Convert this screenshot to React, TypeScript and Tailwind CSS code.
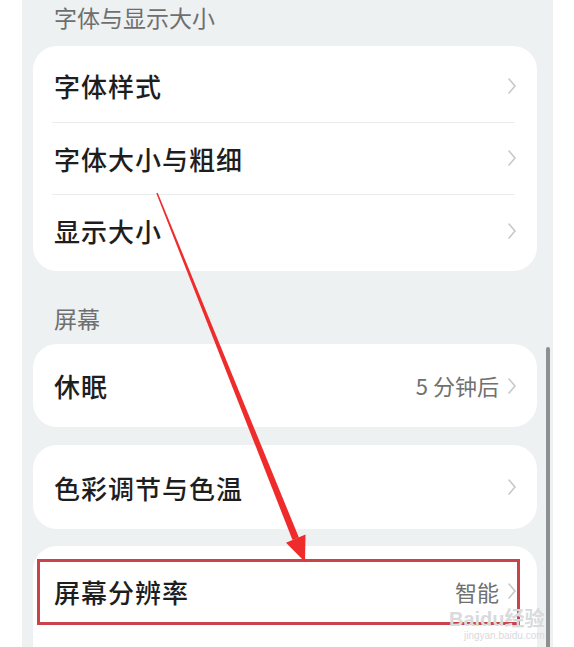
import React from 'react';

const FONT = '"Noto Sans CJK SC", "Noto Sans", sans-serif';

function Chevron() {
  return (
    <svg width="10" height="18" viewBox="0 0 10 18" className="shrink-0">
      <path d="M2 2 L8 9 L2 16" fill="none" stroke="#c6c8ca" strokeWidth="1.6" strokeLinecap="round" strokeLinejoin="round" />
    </svg>
  );
}

function Row({ label, value, className = '' }: { label: string; value?: string; className?: string }) {
  return (
    <div className={`flex items-center justify-between pl-[21px] pr-[20px] ${className}`}>
      <span className="text-[26px] font-medium text-[#1e1e1e] tracking-[1px]">{label}</span>
      <div className="flex items-center gap-[8px]">
        {value && <span className="text-[22px] text-[#707070]">{value}</span>}
        <Chevron />
      </div>
    </div>
  );
}

function SectionTitle({ children, className = '' }: { children: React.ReactNode; className?: string }) {
  return (
    <div className={`h-[36px] flex items-center pl-[21px] text-[23px] text-[#6e6f70] ${className}`}>
      {children}
    </div>
  );
}

export default function App() {
  return (
    <div className="relative w-[574px] h-[647px] bg-white overflow-hidden" style={{ fontFamily: FONT }}>
      <div className="ml-[22px] w-[531px] h-full bg-[#eef1f2] pl-[11px] pr-[16px] flex flex-col">
        <SectionTitle>字体与显示大小</SectionTitle>

        {/* Font card */}
        <div className="mt-[11px] bg-white rounded-[24px] py-[4px] shrink-0">
          <Row label="字体样式" className="h-[72px]" />
          <div className="ml-[19px] mr-[22px] h-px bg-[#ececec]" />
          <Row label="字体大小与粗细" className="h-[71px]" />
          <div className="ml-[19px] mr-[22px] h-px bg-[#ececec]" />
          <Row label="显示大小" className="h-[72px]" />
        </div>

        <SectionTitle className="mt-[30px]">屏幕</SectionTitle>

        <div className="mt-[9px] bg-white rounded-[24px] shrink-0">
          <Row label="休眠" value="5 分钟后" className="h-[83px]" />
        </div>

        <div className="mt-[18px] bg-white rounded-[24px] shrink-0">
          <Row label="色彩调节与色温" className="h-[84px]" />
        </div>

        <div className="relative mt-[17px] bg-white rounded-t-[24px] h-[110px] shrink-0">
          <Row label="屏幕分辨率" value="智能" className="h-[90px]" />
          <div className="absolute top-[13px] left-[4px] w-[483px] h-[66px] border-[3px] border-[#c9434b]" />
          {/* watermark */}
          <div className="absolute top-[63px] left-[416px] flex flex-col items-end leading-none text-[#d8dadc] whitespace-nowrap">
            <span className="text-[20px] font-bold" style={{ fontFamily: '"Liberation Sans", "Noto Sans CJK SC", sans-serif' }}>Baidu经验</span>
            <span className="text-[10px] mt-[2px]" style={{ fontFamily: '"Liberation Sans", sans-serif' }}>jingyan.baidu.com</span>
          </div>
        </div>
      </div>

      {/* scrollbar */}
      <div className="absolute left-[546px] top-[347px] w-[4px] h-[320px] rounded-full bg-[#8d8f90]" />

      {/* red arrow */}
      <svg className="absolute inset-0 pointer-events-none" width="574" height="647" viewBox="0 0 574 647">
        <polygon points="157.7,192.7 156.3,193.3 292.5,540.1 298.9,537.5" fill="#ee2c2c" />
        <polygon points="305,562 305.5,534.5 286,542.8" fill="#ee2c2c" />
      </svg>
    </div>
  );
}
